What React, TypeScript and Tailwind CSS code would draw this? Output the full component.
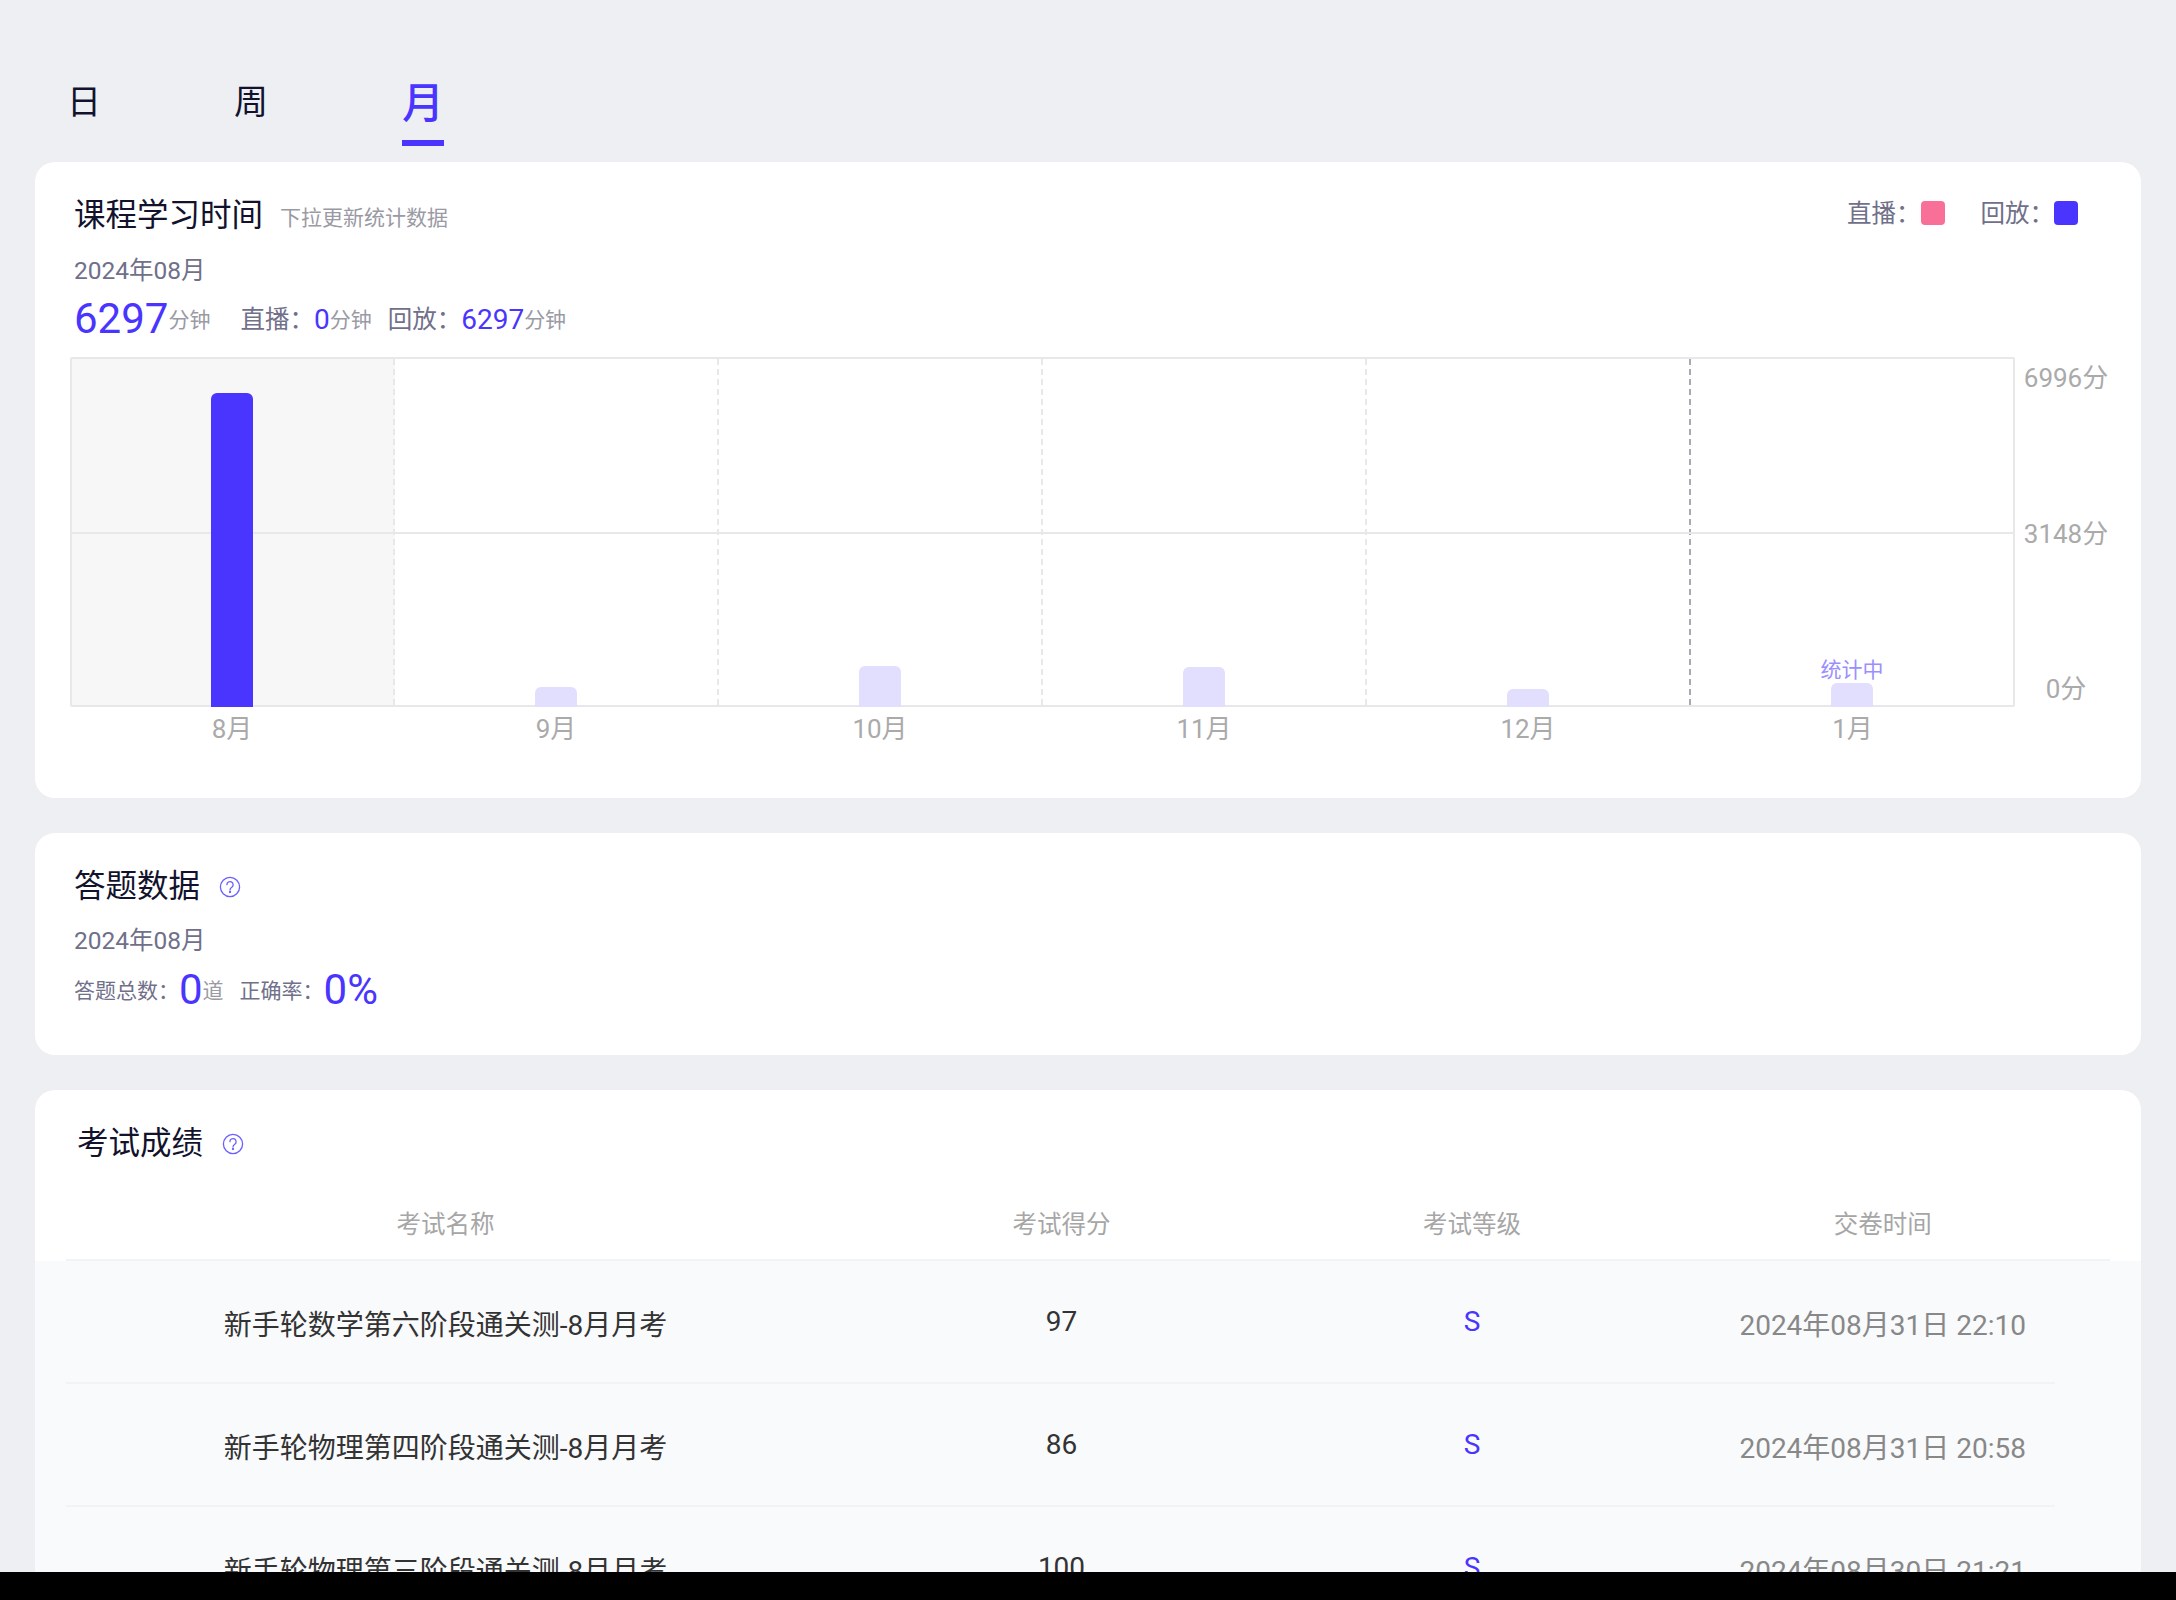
const FONT = "font-['Roboto','Noto_Sans_CJK_SC',sans-serif]";

function Help() {
  return (
    <svg width="22" height="22" viewBox="0 0 22 22" fill="none" stroke="#6a5fff" strokeWidth="1.3" className="shrink-0">
      <circle cx="11" cy="11" r="9.6" />
      <path d="M7.9 8.7a3.1 3.1 0 1 1 4.9 2.5c-1.1.8-1.8 1.4-1.8 2.7" strokeLinecap="round" />
      <circle cx="11" cy="16" r="0.5" fill="#6a5fff" />
    </svg>
  );
}

const months = [
  { m: "8月", h: 314, on: true },
  { m: "9月", h: 20 },
  { m: "10月", h: 41 },
  { m: "11月", h: 40 },
  { m: "12月", h: 18 },
  { m: "1月", h: 24, live: true },
];

const rows = [
  ["新手轮数学第六阶段通关测-8月月考", "97", "S", "2024年08月31日 22:10"],
  ["新手轮物理第四阶段通关测-8月月考", "86", "S", "2024年08月31日 20:58"],
  ["新手轮物理第三阶段通关测-8月月考", "100", "S", "2024年08月30日 21:21"],
];

function Chart() {
  return (
    <div className="ml-[35px] mt-[13px] flex">
      <div className="w-[1945px] shrink-0">
        <div className="relative flex h-[350px] items-stretch rounded-[2px] border-2 border-[#e8e8ea]">
          <div className="absolute left-0 right-0 top-[173px] h-[2px] bg-[#e8e8ea]" />
          {months.map((c, i) => (
            <div
              key={c.m}
              className={
                i === 0
                  ? "flex w-[323px] items-end justify-center border-r-2 border-dashed border-r-[#e8e8ea] bg-[#f7f7f7]"
                  : i === 4
                    ? "flex w-[324px] items-end justify-center border-r-2 border-dashed border-r-[#a9a8b4]"
                    : i === 5
                      ? "flex flex-1 items-end justify-center"
                      : "flex w-[324px] items-end justify-center border-r-2 border-dashed border-r-[#e8e8ea]"
              }
            >
              <div
                className={
                  c.on
                    ? "relative -mb-[2px] -ml-[2px] w-[42px] rounded-t-[6px] bg-[#4a35ff]"
                    : "relative -mb-[2px] w-[42px] rounded-t-[6px] bg-[#e2dffe]"
                }
                style={{ height: c.h }}
              >
                {c.live ? (
                  <span className="absolute bottom-[23px] left-1/2 -translate-x-1/2 whitespace-nowrap text-[21px] leading-[28px] text-[#9a8fff]">
                    统计中
                  </span>
                ) : null}
              </div>
            </div>
          ))}
        </div>
        <div className="flex">
          {months.map((c, i) => (
            <div
              key={c.m}
              className={
                i === 5
                  ? "flex-1 pt-[4px] text-center text-[26px] leading-[36px] text-[#aaaaaa]"
                  : "w-[324px] pt-[4px] text-center text-[26px] leading-[36px] text-[#aaaaaa]"
              }
            >
              {c.m}
            </div>
          ))}
        </div>
      </div>
      <div className="ml-[8px] flex h-[350px] w-[86px] flex-col justify-between pt-[3px] text-center text-[26px] leading-[36px] text-[#aaaaaa]">
        <div>6996分</div>
        <div>3148分</div>
        <div>0分</div>
      </div>
    </div>
  );
}

export default function App() {
  return (
    <div className={`${FONT} flex h-[1600px] w-[2176px] flex-col overflow-hidden bg-[#edeff3]`}>
      <div className="min-h-0 flex-1 overflow-hidden px-[35px]">
        <div className="flex h-[162px] items-start pl-[32px] pt-[78px] text-[#12122d]">
          <div className="w-[167px] text-[34px] leading-[48px]">日</div>
          <div className="w-[168px] text-[34px] leading-[48px]">周</div>
          <div className="-mt-[2px] flex w-[42px] flex-col items-center">
            <div className="text-[42px] font-medium leading-[56px] text-[#4a35ff]">月</div>
            <div className="mt-[8px] h-[6px] w-[42px] bg-[#4a35ff]" />
          </div>
        </div>

        <section className="h-[636px] rounded-[20px] bg-white">
          <div className="flex items-start justify-between pl-[39px] pr-[63px] pt-[32px]">
            <div className="flex items-center">
              <span className="text-[31.5px] leading-[44px] text-[#12122d]">课程学习时间</span>
              <span className="ml-[17px] mt-[3px] text-[21px] leading-[30px] text-[#9a9aa5]">下拉更新统计数据</span>
            </div>
            <div className="mt-[5px] flex items-center text-[24.5px] leading-[24px] text-[#70708a]">
              <span className="mt-[3px]">直播：</span>
              <span className="h-[24px] w-[24px] rounded-[4px] bg-[#f87098]" />
              <span className="ml-[36px] mt-[3px]">回放：</span>
              <span className="h-[24px] w-[24px] rounded-[4px] bg-[#4a35ff]" />
            </div>
          </div>
          <div className="ml-[39px] mt-[15px] text-[24.5px] leading-[36px] text-[#70708a]">2024年08月</div>
          <div className="ml-[39px] mt-[5px] flex h-[50px] items-center text-[24.5px] text-[#70708a]">
            <span className="-mt-[2px] text-[42px] text-[#4a35ff]">6297</span>
            <span className="mt-[3px] text-[21px] text-[#9a9aa5]">分钟</span>
            <span className="ml-[30px] mt-[2px]">直播：</span>
            <span className="mt-[1px] text-[28px] text-[#4a35ff]">0</span>
            <span className="mt-[4px] text-[21px] text-[#9a9aa5]">分钟</span>
            <span className="ml-[16px] mt-[2px]">回放：</span>
            <span className="mt-[1px] text-[28px] text-[#4a35ff]">6297</span>
            <span className="mt-[4px] text-[21px] text-[#9a9aa5]">分钟</span>
          </div>
          <Chart />
        </section>

        <section className="mt-[35px] h-[222px] rounded-[20px] bg-white pl-[39px] pt-[32px]">
          <div className="flex items-center">
            <span className="text-[31.5px] leading-[44px] text-[#12122d]">答题数据</span>
            <span className="ml-[19px]"><Help /></span>
          </div>
          <div className="mt-[14px] text-[24.5px] leading-[36px] text-[#70708a]">2024年08月</div>
          <div className="mt-[5px] flex h-[50px] items-center text-[21px] text-[#70708a]">
            <span className="mt-[6px]">答题总数：</span>
            <span className="text-[42px] text-[#4a35ff]">0</span>
            <span className="mt-[6px] text-[21px] text-[#9a9aa5]">道</span>
            <span className="ml-[16px] mt-[6px]">正确率：</span>
            <span className="text-[42px] text-[#4a35ff]">0%</span>
          </div>
        </section>

        <section className="mt-[35px] rounded-t-[20px] bg-white">
          <div className="flex items-center pl-[42px] pt-[32px]">
            <span className="text-[31.5px] leading-[44px] text-[#12122d]">考试成绩</span>
            <span className="ml-[19px]"><Help /></span>
          </div>
          <div className="mx-[31px] mt-[41px] border-b-2 border-b-[#f2f3f5] pb-[16px]">
            <div className="-ml-[31px] mr-[22px] grid grid-cols-[2fr_1fr_1fr_1fr] text-center text-[24.5px] leading-[36px] text-[#a6a6a6]">
              <div>考试名称</div>
              <div>考试得分</div>
              <div>考试等级</div>
              <div>交卷时间</div>
            </div>
          </div>
          <div className="bg-[#f9fafc]">
            {rows.map((r) => (
              <div key={r[0]} className="ml-[31px] mr-[86px] h-[123px] border-b-2 border-b-[#f2f3f5]">
                <div className="-ml-[31px] -mr-[33px] grid h-full grid-cols-[2fr_1fr_1fr_1fr] items-center text-center text-[28px] leading-[40px]">
                  <div className="pt-[8px] text-[#333333]">{r[0]}</div>
                  <div className="text-[#333333]">{r[1]}</div>
                  <div className="text-[#4a35ff]">{r[2]}</div>
                  <div className="pt-[8px] text-[#888888]">{r[3]}</div>
                </div>
              </div>
            ))}
          </div>
        </section>
      </div>
      <div className="h-[28px] shrink-0 bg-black" />
    </div>
  );
}
